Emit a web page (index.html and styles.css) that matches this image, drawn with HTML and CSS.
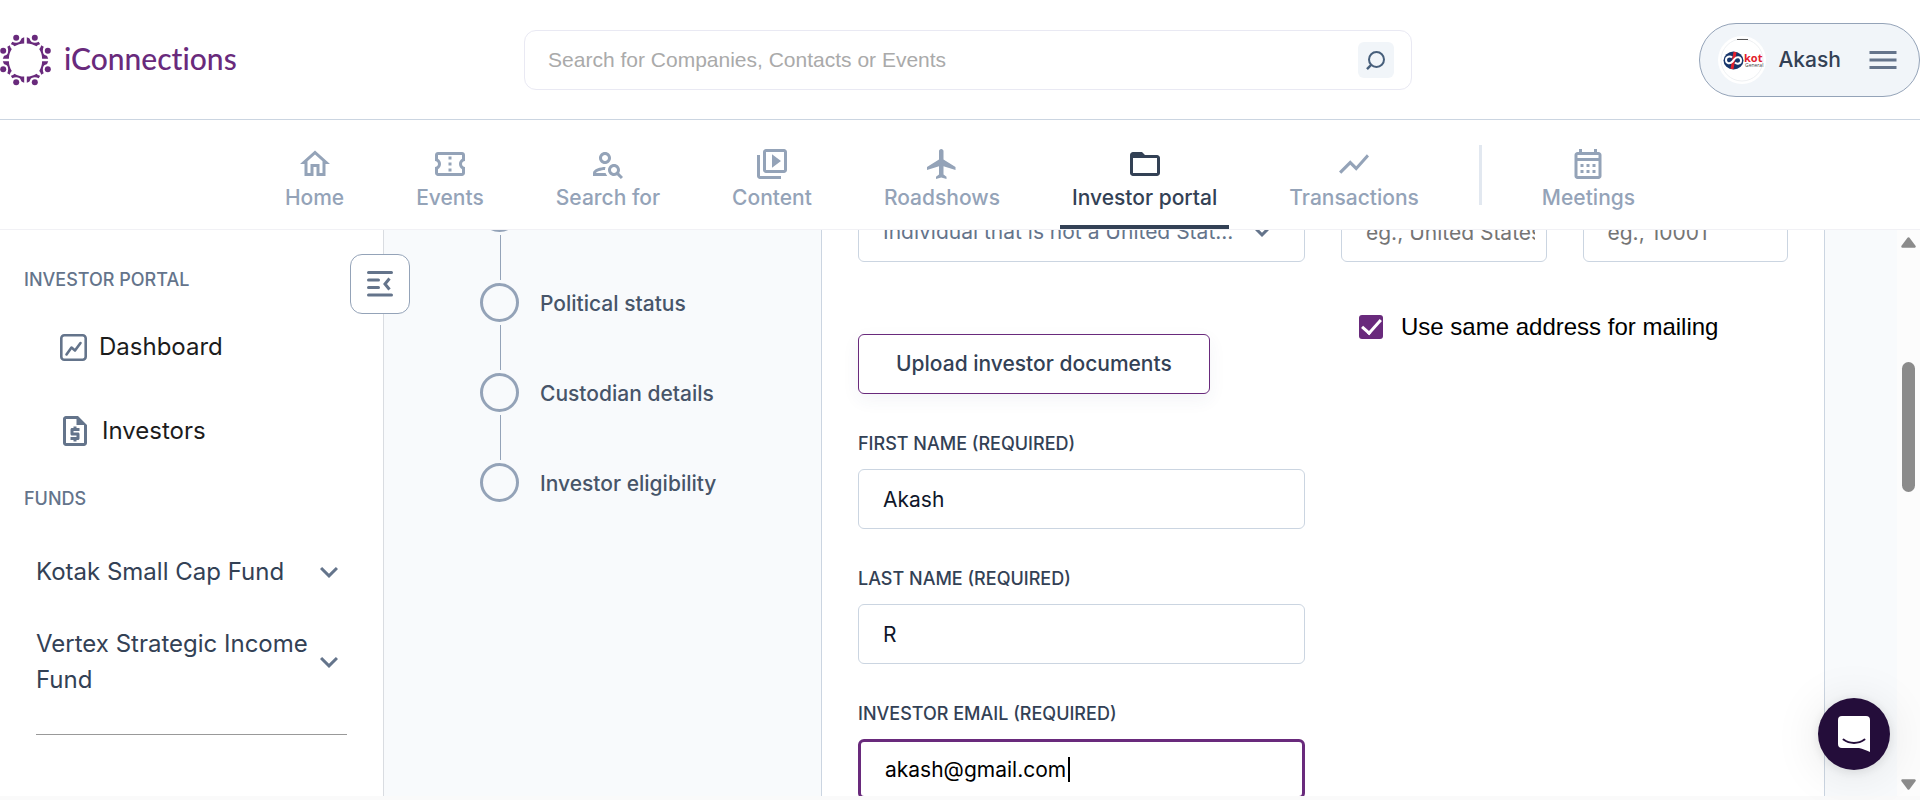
FILE: index.html
```html
<!DOCTYPE html>
<html lang="en">
<head>
<meta charset="utf-8">
<title>iConnections – Investor portal</title>
<link rel="stylesheet" href="styles.css">
</head>
<body>
<header class="topbar">
  <a class="brand" href="#" aria-label="iConnections">
    <svg class="brand-mark" viewBox="0 0 51 52" aria-hidden="true">
      <defs>
        <g id="person">
          <circle cx="16.2" cy="3.7" r="3"/>
          <path d="M24.2 3.3V9.4C20.5 9.4 17.500 10.500 14.500 12.300C13.500 11.200 12.300 10.600 10.800 10.300L12.300 7.800C14.500 8.800 17 9 19.300 8C20.900 7 20.600 5.500 21.800 4.300Z"/>
        </g>
        <g id="pair">
          <use href="#person"/>
          <use href="#person" transform="matrix(-1 0 0 1 51 0)"/>
        </g>
      </defs>
      <g fill="#692a7c">
        <use href="#pair"/>
        <use href="#pair" transform="rotate(90 25.5 26)"/>
        <use href="#pair" transform="rotate(180 25.5 26)"/>
        <use href="#pair" transform="rotate(270 25.5 26)"/>
      </g>
    </svg>
    <span class="brand-name">iConnections</span>
  </a>
  <form class="search" role="search">
    <input class="search-input" type="search" aria-label="Search" placeholder="Search for Companies, Contacts or Events">
    <button class="search-button" type="button" aria-label="Search">
      <svg width="24" height="24" viewBox="0 0 24 24" fill="none" stroke="#475f7b" stroke-width="2"><circle cx="12.500" cy="11.500" r="7.500"/><path d="M7 17l-4 4.200" stroke-width="2.500"/></svg>
    </button>
  </form>
  <button class="user" type="button">
    <span class="avatar">
      <svg width="48" height="48" viewBox="0 0 48 48" aria-hidden="true">
        <circle cx="24" cy="24" r="21" fill="none" stroke="#eef0f2"/>
        <path d="M19 3.500h11" stroke="#555" stroke-width="1"/>
        <ellipse cx="15.500" cy="24.500" rx="10" ry="9" fill="#17366b"/>
        <path d="M17 16l-3 17" stroke="#e2202c" stroke-width="3"/>
        <path d="M14 21.500c-2-2-6-1-6 2.500s4 4.500 6.500 1.500l2-2.500c2.500-3 6.500-2 6.500 1.500s-4 4-6 2" fill="none" stroke="#fff" stroke-width="2"/>
        <text x="26" y="26" class="avatar-name">kot</text>
        <text x="27" y="31" class="avatar-sub">General</text>
      </svg>
    </span>
    <span class="user-name">Akash</span>
    <svg class="icon" viewBox="0 0 24 24"><path d="M3 18h18v-2H3v2zm0-5h18v-2H3v2zm0-7v2h18V6H3z"/></svg>
  </button>
</header>

<nav class="tabs" aria-label="Main">
  <a class="tab" href="#"><svg class="icon" viewBox="0 0 24 24"><path d="M12 5.690l5 4.500V18h-2v-6H9v6H7v-7.810l5-4.500M12 3L2 12h3v8h6v-6h2v6h6v-8h3L12 3z"/></svg>Home</a>
  <a class="tab" href="#"><svg class="icon" viewBox="0 0 24 24"><path d="M22 10V6c0-1.110-.9-2-2-2H4c-1.100 0-1.990.89-1.990 2v4c1.100 0 1.990.9 1.990 2s-.89 2-2 2v4c0 1.100.9 2 2 2h16c1.100 0 2-.9 2-2v-4c-1.100 0-2-.9-2-2s.9-2 2-2zm-2-1.460c-1.190.69-2 1.990-2 3.460s.81 2.770 2 3.460V18H4v-2.540c1.190-.69 2-1.990 2-3.460 0-1.480-.8-2.770-1.990-3.460L4 6h16v2.540zM11 15h2v2h-2zm0-4h2v2h-2zm0-4h2v2h-2z"/></svg>Events</a>
  <a class="tab" href="#"><svg class="icon" viewBox="0 0 24 24"><path d="M10 12c2.210 0 4-1.790 4-4s-1.790-4-4-4-4 1.790-4 4 1.790 4 4 4zm0-6c1.100 0 2 .9 2 2s-.9 2-2 2-2-.9-2-2 .9-2 2-2zM4 18c.22-.72 3.310-2 6-2 0-.7.13-1.370.35-1.990C7.620 13.910 2 15.270 2 18v2h9.540c-.52-.58-.93-1.250-1.190-2H4zM19.430 18.020c.36-.59.57-1.280.57-2.020 0-2.210-1.790-4-4-4s-4 1.790-4 4 1.790 4 4 4c.74 0 1.430-.22 2.020-.57L20.590 22 22 20.590l-2.570-2.570zM16 18c-1.100 0-2-.9-2-2s.9-2 2-2 2 .9 2 2-.9 2-2 2z"/></svg>Search for</a>
  <a class="tab" href="#"><svg class="icon" viewBox="0 0 24 24"><path d="M4 6H2v14c0 1.100.9 2 2 2h14v-2H4V6zm16-4H8c-1.100 0-2 .9-2 2v12c0 1.100.9 2 2 2h12c1.100 0 2-.9 2-2V4c0-1.100-.9-2-2-2zm0 14H8V4h12v12zM12 5.500v9l6-4.500z"/></svg>Content</a>
  <a class="tab" href="#"><svg class="icon" viewBox="0 0 24 24"><path d="M21 16v-2l-8-5V3.500c0-.83-.67-1.500-1.500-1.500S10 2.670 10 3.500V9l-8 5v2l8-2.500V19l-2 1.500V22l3.500-1 3.500 1v-1.500L13 19v-5.500l8 2.500z"/></svg>Roadshows</a>
  <a class="tab tab-active" href="#" aria-current="page"><svg class="icon" viewBox="0 0 24 24"><path d="M20 6h-8l-2-2H4c-1.100 0-1.990.9-1.990 2L2 18c0 1.100.9 2 2 2h16c1.100 0 2-.9 2-2V8c0-1.100-.9-2-2-2zm0 12H4V8h16v10z"/></svg>Investor portal</a>
  <a class="tab" href="#"><svg class="icon" viewBox="0 0 24 24"><path d="M3.500 18.490l6-6.010 4 4L22 6.920l-1.410-1.410-7.090 7.970-4-4L2 16.990z"/></svg>Transactions</a>
  <span class="tab-divider"></span>
  <a class="tab" href="#"><svg class="icon" viewBox="0 0 24 24"><path d="M19 4h-1V2h-2v2H8V2H6v2H5c-1.110 0-1.990.9-1.990 2L3 20c0 1.100.89 2 2 2h14c1.100 0 2-.9 2-2V6c0-1.100-.9-2-2-2zm0 16H5V10h14v10zm0-12H5V6h14v2zM9 14H7v-2h2v2zm4 0h-2v-2h2v2zm4 0h-2v-2h2v2zm-8 4H7v-2h2v2zm4 0h-2v-2h2v2zm4 0h-2v-2h2v2z"/></svg>Meetings</a>
</nav>

<div class="workspace">
  <aside class="sidebar">
    <button class="collapse" type="button" aria-label="Collapse sidebar">
      <svg width="26" height="26" viewBox="0 0 26 26" fill="none" stroke="#64748b" stroke-width="3" stroke-linecap="round"><path d="M1.500 1.500h23M1.500 9h10M1.500 16.500h10M1.500 24h23"/><path d="M22.500 7.500L18 13l4.500 5.500" stroke-linecap="butt"/></svg>
    </button>
    <h2 class="side-title">INVESTOR PORTAL</h2>
    <a class="side-link" href="#">
      <svg width="27" height="27" viewBox="0 0 27 27" fill="none" stroke="#64748b" stroke-width="2.600" stroke-linecap="round" stroke-linejoin="round"><rect x="1.300" y="1.300" width="24.400" height="24.400" rx="3"/><path d="M6.500 20.500l5-7 3.500 3 5.500-7.500"/></svg>
      Dashboard</a>
    <a class="side-link side-link-file" href="#">
      <svg class="icon" viewBox="0 0 24 24"><path d="M14 2H6c-1.100 0-2 .9-2 2v16c0 1.100.89 2 1.990 2H18c1.100 0 2-.9 2-2V8l-6-6zM6 20V4h7v4h5v12H6zM11 19h2v-1h1c.55 0 1-.45 1-1v-3c0-.55-.45-1-1-1h-3v-1h4v-2h-2V9h-2v1h-1c-.55 0-1 .45-1 1v3c0 .55.45 1 1 1h3v1H9v2h2v1z"/></svg>
      Investors</a>
    <h2 class="side-title side-title-funds">FUNDS</h2>
    <button class="fund" type="button"><span>Kotak Small Cap Fund</span><svg class="icon" viewBox="0 0 24 24"><path d="M7.410 8.590L12 13.170l4.590-4.580L18 10l-6 6-6-6z"/></svg></button>
    <button class="fund" type="button"><span>Vertex Strategic Income Fund</span><svg class="icon" viewBox="0 0 24 24"><path d="M7.410 8.590L12 13.170l4.590-4.580L18 10l-6 6-6-6z"/></svg></button>
    <hr class="side-rule">
  </aside>

  <main class="content">
    <ol class="steps">
      <li class="step"><span class="step-dot"></span></li>
      <li class="step"><span class="step-dot"></span><span>Political status</span></li>
      <li class="step"><span class="step-dot"></span><span>Custodian details</span></li>
      <li class="step"><span class="step-dot"></span><span>Investor eligibility</span></li>
    </ol>
    <form class="card">
      <div class="column">
        <div class="select-wrap">
          <select class="field select" aria-label="Investor type"><option>Individual that is not a United Stat...</option></select>
          <svg class="icon select-arrow" viewBox="0 0 24 24"><path d="M7.410 8.590L12 13.170l4.590-4.580L18 10l-6 6-6-6z"/></svg>
        </div>
        <button class="upload" type="button">Upload investor documents</button>
        <div class="group">
          <label class="label" for="first">FIRST NAME (REQUIRED)</label>
          <input class="field" id="first" type="text" value="Akash">
        </div>
        <div class="group">
          <label class="label" for="last">LAST NAME (REQUIRED)</label>
          <input class="field" id="last" type="text" value="R">
        </div>
        <div class="group">
          <label class="label" for="email">INVESTOR EMAIL (REQUIRED)</label>
          <div class="email-wrap">
            <input class="field field-focus" id="email" type="text" value="akash@gmail.com">
            <span class="caret"></span>
          </div>
        </div>
      </div>
      <div class="column">
        <div class="pair">
          <input class="field" type="text" aria-label="Country" placeholder="eg., United States">
          <input class="field" type="text" aria-label="Postal code" placeholder="eg., 10001">
        </div>
        <div class="check">
          <input class="check-box" id="same" type="checkbox" checked>
          <label for="same">Use same address for mailing</label>
        </div>
      </div>
    </form>
    <div class="scrollbar" aria-hidden="true">
      <svg width="15" height="11" viewBox="0 0 15 11"><path d="M7.500 1.500L13.500 9.500h-12z" fill="#8b8b8b" stroke="#8b8b8b" stroke-width="2.500" stroke-linejoin="round"/></svg>
      <span class="thumb"></span>
      <svg width="15" height="11" viewBox="0 0 15 11"><path d="M7.500 9.500L13.500 1.500h-12z" fill="#8b8b8b" stroke="#8b8b8b" stroke-width="2.500" stroke-linejoin="round"/></svg>
    </div>
  </main>
</div>

<button class="chat" type="button" aria-label="Open chat">
  <svg width="32" height="36" viewBox="0 0 32 36"><path d="M4 0h24a4 4 0 0 1 4 4v32c-4-1.500-7-3.500-11-4H4a4 4 0 0 1-4-4V4a4 4 0 0 1 4-4z" fill="#fff"/><path d="M5.500 23.500c6 4.500 15 4.500 21 0" fill="none" stroke="#240d3a" stroke-width="2" stroke-linecap="round"/></svg>
</button>
</body>
</html>
```
FILE: styles.css
```css
* { box-sizing: border-box; }

body {
  margin: 0;
  height: 100vh;
  padding-bottom: 4px;
  display: flex;
  flex-direction: column;
  overflow: hidden;
  background: #fafafa;
  font-family: Inter, "Liberation Sans", sans-serif;
  font-size: 21px;
  line-height: 30px;
  color: #334155;
}

a { color: inherit; text-decoration: none; }
button, input, select { font: inherit; color: inherit; margin: 0; }
button { cursor: pointer; padding: 0; border: 0; background: none; }

.icon { width: 36px; height: 36px; flex: none; fill: #64748b; }

/* Top bar */
.topbar {
  flex: none;
  height: 120px;
  display: flex;
  justify-content: space-between;
  gap: 20px;
  align-items: center;
  background: #fff;
  border-bottom: 1px solid #cbd5e1;
}
.brand { display: flex; align-items: center; gap: 13px; color: #692a7c; }
.brand-mark { width: 51px; height: 52px; }
.brand-name {
  padding-bottom: 3px;
  font-family: Lato, sans-serif;
  font-size: 30px;
  font-weight: 500;
  font-variant-ligatures: none;
  line-height: 36px;
}
.search {
  flex: 0 1 888px;
  height: 60px;
  display: flex;
  align-items: center;
  padding: 0 17px 0 23px;
  border: 1px solid #e9e9f3;
  border-radius: 12px;
}
.search-input {
  flex: 1;
  border: 0;
  padding: 0;
  outline: 0;
  background: none;
  font-family: "Liberation Sans", Arial, sans-serif;
}
.search-input::placeholder { color: #aaa; }
.search-button {
  width: 36px;
  height: 36px;
  display: grid;
  place-items: center;
  border-radius: 6px;
  background: #f1f5f9;
}
.user {
  height: 74px;
  display: flex;
  align-items: center;
  padding: 0 18px;
  border: 1px solid #94a3b8;
  border-radius: 37px;
  background: #f1f5f9;
}
.avatar { width: 48px; height: 48px; border-radius: 50%; background: #fff; overflow: hidden; }
.avatar svg { display: block; }
.avatar-name { font: bold 11px "Open Sans", sans-serif; fill: #e2202c; }
.avatar-sub { font: 5px "Open Sans", sans-serif; fill: #444; }
.user-name { margin: 0 24px 0 12px; font-weight: 500; }

/* Main navigation */
.tabs {
  flex: none;
  height: 110px;
  display: flex;
  justify-content: center;
  align-items: stretch;
  gap: 48px;
  background: #fff;
  border-bottom: 1px solid #f1f1f5;
}
.tab {
  display: flex;
  flex-direction: column;
  align-items: center;
  padding: 26px 12px 0;
  border-bottom: 4px solid transparent;
  font-weight: 500;
  line-height: 32px;
  color: #94a3b8;
}
.tab .icon { fill: #94a3b8; }
.tab-active { color: #334155; border-color: #334155; }
.tab-active .icon { fill: #334155; }
.tab-divider { align-self: center; width: 3px; height: 60px; background: #e2e8f0; }

/* Sidebar */
.workspace { flex: 1; min-height: 0; display: flex; }
.sidebar {
  position: relative;
  flex: none;
  width: 384px;
  padding: 36px 36px 0 24px;
  background: #fff;
  border-right: 1px solid #d9dce1;
}
.collapse {
  position: absolute;
  top: 24px;
  right: -27px;
  z-index: 1;
  width: 60px;
  height: 60px;
  display: grid;
  place-items: center;
  border: 1px solid #94a3b8;
  border-radius: 12px;
  background: #fff;
}
.side-title { margin: 0 0 12px; font-size: 18px; line-height: 27px; font-weight: 500; color: #64748b; }
.side-title-funds { margin: 12px 0 24px; }
.side-link {
  height: 84px;
  display: flex;
  align-items: center;
  gap: 12px;
  padding-left: 36px;
  font-size: 24px;
  line-height: 36px;
  color: #1c1c1c;
}
.side-link-file { gap: 9px; padding-left: 33px; }
.fund {
  width: 100%;
  display: flex;
  justify-content: space-between;
  align-items: center;
  padding: 18px 0 18px 12px;
  font-size: 24px;
  line-height: 36px;
  text-align: left;
}
.side-rule { margin: 18px 0 0 12px; border: 0; border-top: 1px solid #999; }

/* Content */
.content { flex: 1; min-width: 0; display: flex; overflow: hidden; background: #f8fafc; }
.steps {
  flex: none;
  width: 437px;
  margin: -37px 0 0;
  padding: 0 0 0 96px;
  list-style: none;
}
.step {
  position: relative;
  height: 90px;
  display: flex;
  align-items: flex-start;
  gap: 21px;
  line-height: 41px;
  font-weight: 500;
  color: #475569;
}
.step:not(:last-child)::after {
  content: "";
  position: absolute;
  left: 20px;
  top: 42px;
  width: 1px;
  height: 45px;
  background: #94a3b8;
}
.step-dot { width: 39px; height: 39px; border: 3px solid #94a3b8; border-radius: 50%; }
.card {
  flex: 1;
  min-width: 0;
  display: grid;
  grid-template-columns: 1fr 1fr;
  gap: 36px;
  align-items: start;
  margin-top: -28px;
  margin-right: 72px;
  padding: 0 36px;
  background: #fff;
  border: solid #cbd5e1;
  border-width: 0 1px;
}
.column { min-width: 0; display: flex; flex-direction: column; gap: 36px; }
.field {
  width: 100%;
  min-width: 0;
  height: 60px;
  padding: 0 11px 0 24px;
  border: 1px solid #cbd5e1;
  border-radius: 6px;
  outline: 0;
  background: #fff;
  color: #0f172a;
}
.field::placeholder { color: #757575; }
.select-wrap { position: relative; margin-bottom: 36px; }
.select { appearance: none; color: #64748b; }
.select-arrow { position: absolute; right: 25px; top: 11px; pointer-events: none; }
.upload {
  align-self: flex-start;
  height: 60px;
  padding: 0 37px;
  border: 1px solid #692a7c;
  border-radius: 6px;
  background: #fff;
  box-shadow: 0 6px 18px rgba(51, 65, 120, 0.06);
  font-weight: 500;
}
.label { display: block; margin-bottom: 12px; font-size: 18px; line-height: 27px; font-weight: 500; }
.email-wrap { position: relative; }
.field-focus { border: 3px solid #692a7c; color: #000; caret-color: transparent; }
.caret { position: absolute; left: 210px; top: 18px; width: 2px; height: 25px; background: #000; }
.pair { display: grid; grid-template-columns: 1fr 1fr; gap: 36px; }
.check {
  display: flex;
  align-items: center;
  gap: 18px;
  margin-top: 11px;
  padding-left: 18px;
  font-family: "Liberation Sans", Arial, sans-serif;
  font-size: 24px;
  line-height: 36px;
  color: #000;
}
.check-box {
  appearance: none;
  width: 24px;
  height: 24px;
  display: grid;
  place-items: center;
  border-radius: 3px;
  background: #692a7c;
}
.check-box:checked::before {
  content: "";
  width: 16px;
  height: 8px;
  margin-bottom: 5px;
  border: solid #fff;
  border-width: 0 0 3px 3px;
  transform: rotate(-48deg);
}
.scrollbar {
  flex: none;
  width: 23px;
  display: flex;
  flex-direction: column;
  align-items: center;
  justify-content: space-between;
  padding: 7px 0 6px;
  background: #fcfcfc;
}
.thumb { width: 13px; height: 130px; margin-bottom: 173px; border-radius: 7px; background: #8b8b8b; }

.chat {
  position: fixed;
  right: 30px;
  bottom: 30px;
  width: 72px;
  height: 72px;
  display: grid;
  place-items: center;
  border-radius: 50%;
  background: #240d3a;
  box-shadow: 0 2px 12px rgba(0, 0, 0, 0.1), 0 4px 48px rgba(0, 0, 0, 0.1);
}
```
